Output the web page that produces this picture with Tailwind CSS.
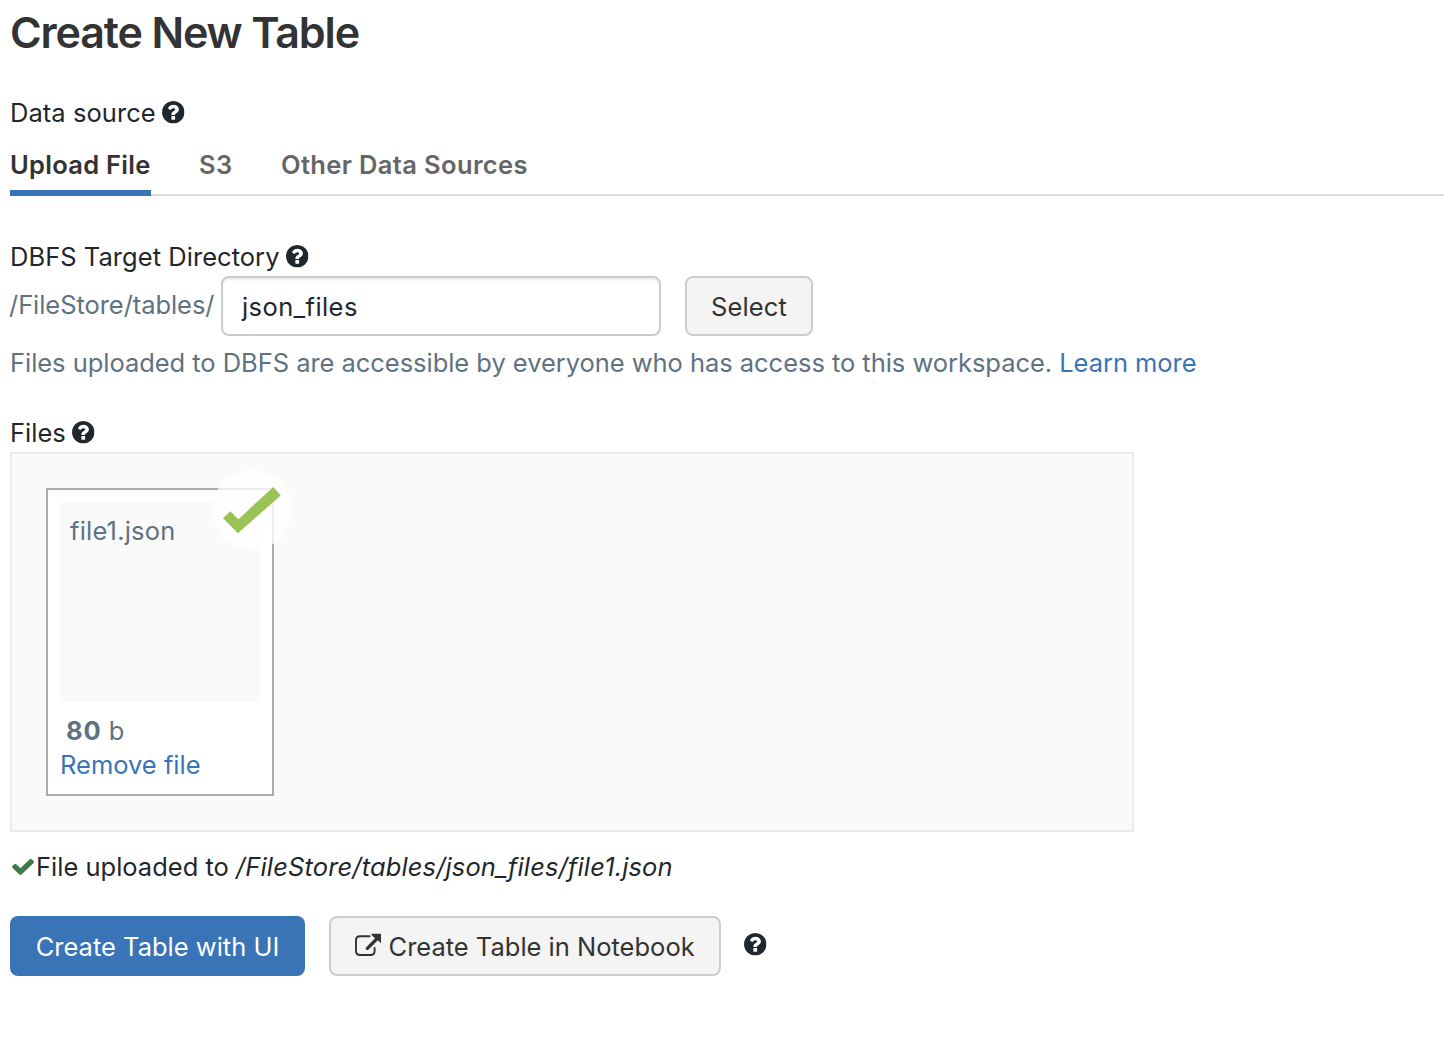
<!DOCTYPE html>
<html lang="en">
<head>
<meta charset="utf-8">
<title>Create New Table</title>
<script src="https://cdn.jsdelivr.net/npm/@tailwindcss/browser@4"></script>
</head>
<body class="bg-white pl-[10px] font-['Inter',sans-serif] text-[25.5px] leading-[38px] text-[#1f272d] whitespace-nowrap overflow-hidden">
<svg class="hidden">
  <symbol id="help" viewBox="128 128 1536 1536"><path fill="currentColor" d="M1024 1376v-192q0-14-9-23t-23-9h-192q-14 0-23 9t-9 23v192q0 14 9 23t23 9h192q14 0 23-9t9-23zm256-672q0-88-55.500-163t-138.500-116-170-41q-243 0-371 213-15 24 8 42l132 100q7 6 19 6 16 0 25-12 53-68 86-92 34-24 86-24 48 0 85.500 26t37.500 59q0 38-20 61t-68 45q-63 28-115.500 86.500t-52.500 125.500v36q0 14 9 23t23 9h192q14 0 23-9t9-23q0-19 21.500-49.500t54.500-49.500q32-18 49-28.500t46-35 44.500-48 28-60.500 12.500-81zm384 192q0 209-103 385.500t-279.500 279.500-385.500 103-385.500-103-279.500-279.500-103-385.500 103-385.500 279.500-279.500 385.500-103 385.500 103 279.500 279.500 103 385.500z"/></symbol>
</svg>
<h1 class="text-[43px] leading-[65px] font-semibold tracking-[-1.14px] text-[#333]">Create New Table</h1>
<div class="mt-7 flex h-10 items-center"><span class="w-[152px] tracking-[0.05px]">Data source</span><svg class="mb-px size-[22.500px]"><use href="#help"/></svg></div>
<nav class="flex gap-12 border-b-2 border-[#dcdcdc] pt-3 leading-10 font-semibold text-[#666]">
  <a class="-mb-[2px] h-[51px] w-[141px] border-b-6 border-[#3974b7] tracking-[0.28px] text-[#333]">Upload File</a>
  <a class="w-[34px] tracking-[0.3px]">S3</a>
  <a class="tracking-[0.36px]">Other Data Sources</a>
</nav>
<div class="mt-[42px] flex h-[38px] items-center"><span class="w-[276px] tracking-[0.04px]">DBFS Target Directory</span><svg class="mb-px size-[22.500px]"><use href="#help"/></svg></div>
<div class="flex h-[60px] items-center">
  <span class="-ml-px w-[212px] pb-[2px] tracking-[-0.06px] text-[#5f7281]">/FileStore/tables/</span>
  <div class="flex h-[60px] w-[440px] items-center rounded-[8px] border-2 border-[#ccc] pt-[2px] pl-[19px] tracking-[0.4px] shadow-[inset_0_2px_2px_rgba(0,0,0,0.075)]">json_files</div>
  <button class="ml-6 flex h-[60px] w-32 items-center justify-center rounded-[8px] border-2 border-[#ccc] bg-[#f4f4f4] pt-[2px] tracking-[0.15px] text-[#333]">Select</button>
</div>
<div class="leading-[54px] tracking-[-0.042px] text-[#5f7281]">Files uploaded to DBFS are accessible by everyone who has access to this workspace. <a class="text-[#3974b7]">Learn more</a></div>
<div class="mt-6 flex h-[38px] items-center"><span class="w-[62px]">Files</span><svg class="mb-px size-[22.500px]"><use href="#help"/></svg></div>
<section class="h-[380px] w-[1124px] border-2 border-[#ebebeb] bg-[#fafafa] p-[34px]">
  <div class="relative h-[308px] w-[228px] border-2 border-[#acacac] bg-white p-3 text-[#5f7281]">
    <div class="h-[200px] w-[200px] bg-[#fafafa] px-[10px] pt-[10px] tracking-[0.2px]">file1.json</div>
    <div class="mt-3 pl-[6px] leading-[34px]"><b class="font-bold tracking-[0.9px]">80</b> b</div>
    <a class="block leading-[34px] text-[#3974b7]">Remove file</a>
    <div class="absolute -top-[20px] left-[164px] size-20 rounded-full bg-white/80"></div>
    <svg class="absolute -top-[20px] left-[164px] size-20" viewBox="212 470 80 80"><path fill="#9ac355" d="M223 518.300 230.200 511.300 238.400 519.300 273.300 487 280.700 495.400 238 533.300Z"/></svg>
  </div>
</section>
<div class="flex h-[70px] items-center"><svg class="mr-[2px] mb-px ml-[2px] h-[17px] w-[22px] text-[#3c7a48]" viewBox="121 270 1550 1252" preserveAspectRatio="none"><path fill="currentColor" d="M1671 566q0 40-28 68l-724 724-136 136q-28 28-68 28t-68-28l-136-136-362-362q-28-28-28-68t28-68l136-136q28-28 68-28t68 28l294 295 656-657q28-28 68-28t68 28l136 136q28 28 28 68z"/></svg><span class="w-[200px]">File uploaded to</span><i class="tracking-[0.14px]">/FileStore/tables/json_files/file1.json</i></div>
<div class="mt-[14px] flex h-[60px] items-center">
  <button class="flex h-[60px] w-[295px] items-center justify-center rounded-[8px] bg-[#3974b7] pt-[2px] text-white">Create Table with UI</button>
  <button class="ml-6 flex h-[60px] w-[392px] items-center rounded-[8px] border-2 border-[#ccc] bg-[#f4f4f4] pt-[2px] pl-6 text-[#333]">
    <svg class="mr-[5.500px] mb-[4px] h-6 w-7" viewBox="355 933 28 24"><path fill="none" stroke="currentColor" stroke-width="1.900" stroke-linecap="round" d="M369.500 936.300H360Q356 936.300 356 940.300V951Q356 955 360 955H370.600Q374.600 955 374.600 951V948"/><path fill="currentColor" d="M371.500 933.700H381V943.200L377.900 940.300 368.300 949.700Q366.600 950.400 365.800 949.200 365.500 948 366.300 947.300L375 938.200 371.500 935Z"/></svg>Create Table in Notebook</button>
  <svg class="mb-[3px] ml-[23px] size-[22.500px]"><use href="#help"/></svg>
</div>
</body>
</html>
